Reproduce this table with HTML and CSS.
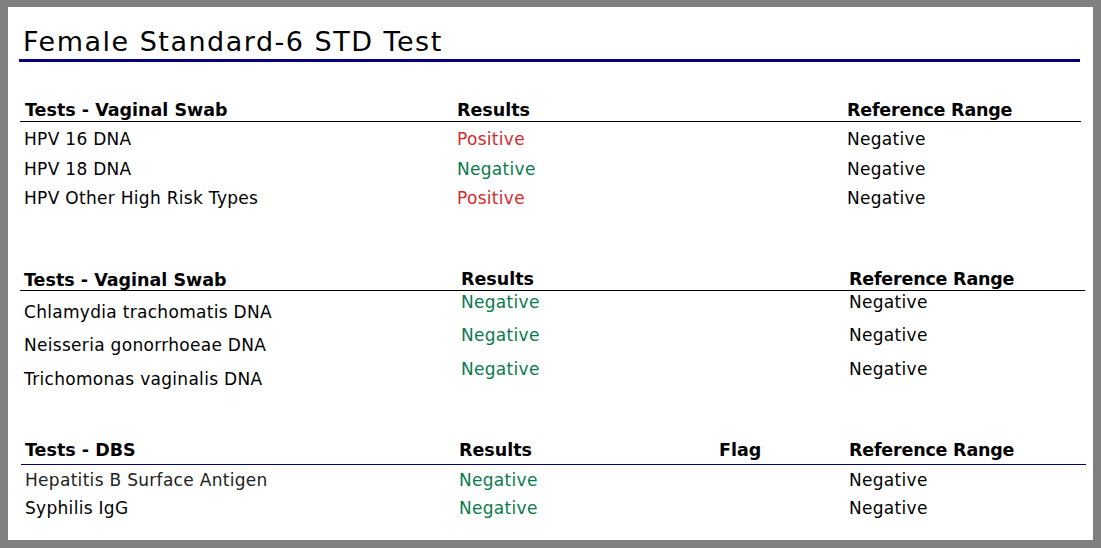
FILE: index.html
```html
<!DOCTYPE html>
<html>
<head>
<meta charset="utf-8">
<link rel="stylesheet" href="styles.css">
</head>
<body>
<div class="panel">
  <h1 class="title">Female Standard-6 STD Test</h1>

  <section class="sec sec1">
    <div class="row head">
      <div class="c-name">Tests - Vaginal Swab</div>
      <div class="c-res">Results</div>
      <div class="c-ref">Reference Range</div>
    </div>
    <div class="row item">
      <div class="c-name">HPV 16 DNA</div>
      <div class="c-res pos">Positive</div>
      <div class="c-ref">Negative</div>
    </div>
    <div class="row item">
      <div class="c-name">HPV 18 DNA</div>
      <div class="c-res neg">Negative</div>
      <div class="c-ref">Negative</div>
    </div>
    <div class="row item">
      <div class="c-name">HPV Other High Risk Types</div>
      <div class="c-res pos">Positive</div>
      <div class="c-ref">Negative</div>
    </div>
  </section>

  <section class="sec sec2">
    <div class="row head">
      <div class="c-name">Tests - Vaginal Swab</div>
      <div class="c-res">Results</div>
      <div class="c-ref">Reference Range</div>
    </div>
    <div class="row item">
      <div class="c-name">Chlamydia trachomatis DNA</div>
      <div class="c-res neg">Negative</div>
      <div class="c-ref">Negative</div>
    </div>
    <div class="row item">
      <div class="c-name">Neisseria gonorrhoeae DNA</div>
      <div class="c-res neg">Negative</div>
      <div class="c-ref">Negative</div>
    </div>
    <div class="row item">
      <div class="c-name">Trichomonas vaginalis DNA</div>
      <div class="c-res neg">Negative</div>
      <div class="c-ref">Negative</div>
    </div>
  </section>

  <section class="sec sec3">
    <div class="row head">
      <div class="c-name">Tests - DBS</div>
      <div class="c-res">Results</div>
      <div class="c-flag">Flag</div>
      <div class="c-ref">Reference Range</div>
    </div>
    <div class="row item">
      <div class="c-name dim">Hepatitis B Surface Antigen</div>
      <div class="c-res neg">Negative</div>
      <div class="c-flag"></div>
      <div class="c-ref">Negative</div>
    </div>
    <div class="row item">
      <div class="c-name">Syphilis IgG</div>
      <div class="c-res neg">Negative</div>
      <div class="c-flag"></div>
      <div class="c-ref">Negative</div>
    </div>
  </section>
</div>
</body>
</html>
```

FILE: styles.css
```css
html, body {
  margin: 0;
  padding: 0;
}
body {
  background: #808080;
  padding: 7px 8px 8px 8px;
  font-family: "DejaVu Sans", sans-serif;
  color: #000;
}
.panel {
  background: #fff;
  width: 1085px;
  height: 533px;
  box-sizing: border-box;
  padding: 19px 0 0 11px;
}
.title {
  margin: 0 0 0 4px;
  font-size: 27px;
  letter-spacing: 1.5px;
  font-weight: normal;
  line-height: 31px;
}
.title::after {
  content: "";
  display: block;
  height: 3px;
  background: #000080;
  width: 1061px;
  margin: 2px 0 0 -4px;
}

.sec {
  width: 1061px;
}
.row {
  display: grid;
}
.head {
  font-weight: bold;
  font-size: 17.5px;
}
.item {
  font-size: 17px;
  letter-spacing: 0.3px;
}

/* section 1 */
.sec1 {
  margin-top: 37px;
  margin-left: 1px;
}
.sec1 .row {
  grid-template-columns: 437px 390px 1fr;
}
.sec1 .c-name { padding-left: 4px; }
.sec1 .head {
  line-height: 21px;
  padding-top: 1px;
  border-bottom: 1px solid #000;
}
.sec1 .head .c-name { padding-left: 5px; }
.sec1 .head .c-ref { letter-spacing: -0.2px; }
.sec1 .item {
  line-height: 29.5px;
}
.sec1 .head + .item { margin-top: 3px; }

/* section 2 */
.sec2 {
  margin-top: 55px;
  margin-left: 1px;
  width: 1065px;
}
.sec2 .row {
  grid-template-columns: 441px 388px 1fr;
}
.sec2 .c-name { padding-left: 4px; }
.sec2 .head {
  line-height: 21px;
  border-bottom: 1px solid #000;
}
.sec2 .head .c-name { padding-top: 2px; line-height: 19px; }
.sec2 .head .c-ref { letter-spacing: -0.2px; }
.sec2 .item {
  height: 33.5px;
  line-height: 22px;
}
.sec2 .item .c-name { padding-top: 10px; }

/* section 3 */
.sec3 {
  margin-top: 48px;
  margin-left: 2px;
  width: 1065px;
}
.sec3 .row {
  grid-template-columns: 438px 260px 130px 1fr;
}
.sec3 .c-name { padding-left: 4px; }
.sec3 .head {
  line-height: 22px;
  padding-bottom: 3px;
  border-bottom: 1px solid #000080;
}
.sec3 .head .c-ref { letter-spacing: -0.2px; }
.sec3 .item {
  line-height: 28px;
}
.sec3 .head + .item { margin-top: 1px; }

.pos { color: #d42a2a; }
.neg { color: #087a4c; }
.dim { color: #222; }
```
